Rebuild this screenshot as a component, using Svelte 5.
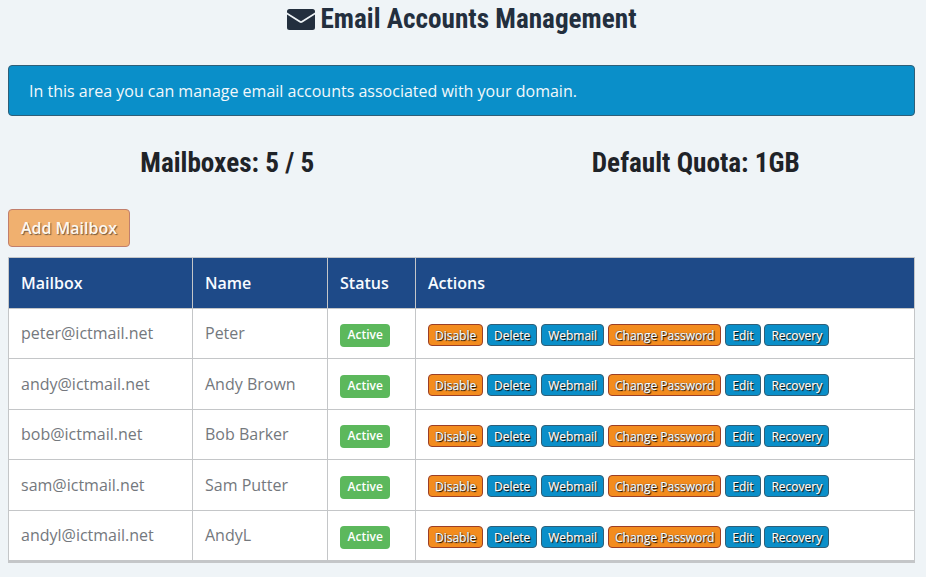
<script lang="ts">
  const mailboxes = [
    { email: 'peter@ictmail.net', name: 'Peter' },
    { email: 'andy@ictmail.net', name: 'Andy Brown' },
    { email: 'bob@ictmail.net', name: 'Bob Barker' },
    { email: 'sam@ictmail.net', name: 'Sam Putter' },
    { email: 'andyl@ictmail.net', name: 'AndyL' }
  ];

  const actions = [
    { label: 'Disable', tone: 'warn' },
    { label: 'Delete', tone: 'info' },
    { label: 'Webmail', tone: 'info' },
    { label: 'Change Password', tone: 'warn' },
    { label: 'Edit', tone: 'info' },
    { label: 'Recovery', tone: 'info' }
  ];
</script>

<div class="page">
  <h1 class="title">
    <svg class="envelope" viewBox="0 0 28 21" aria-hidden="true">
      <path d="M2.500 0h23A2.500 2.500 0 0 1 28 2.500v.9L14 12.200 0 3.400v-.9A2.500 2.500 0 0 1 2.500 0z" />
      <path d="M0 5.600l12.600 8a2.600 2.600 0 0 0 2.800 0l12.600-8v12.900a2.500 2.500 0 0 1-2.500 2.500h-23A2.500 2.500 0 0 1 0 18.500z" />
    </svg>
    <span>Email Accounts Management</span>
  </h1>

  <div class="notice">In this area you can manage email accounts associated with your domain.</div>

  <div class="stats">
    <h2>Mailboxes: 5 / 5</h2>
    <h2>Default Quota: 1GB</h2>
  </div>

  <button type="button" class="add">Add Mailbox</button>

  <table>
    <thead>
      <tr>
        <th class="c1">Mailbox</th>
        <th class="c2">Name</th>
        <th class="c3">Status</th>
        <th>Actions</th>
      </tr>
    </thead>
    <tbody>
      {#each mailboxes as box}
        <tr>
          <td>{box.email}</td>
          <td>{box.name}</td>
          <td class="low"><span class="status">Active</span></td>
          <td class="low">
            <div class="actions">
              {#each actions as action}
                <button type="button" class="act {action.tone}">{action.label}</button>
              {/each}
            </div>
          </td>
        </tr>
      {/each}
    </tbody>
  </table>
</div>

<style>
  :global(body) {
    margin: 0;
    background: #eff4f7;
  }

  .page {
    height: 577px;
    overflow: hidden;
    padding: 0 11px 0 8px;
    box-sizing: border-box;
    font-family: 'Open Sans', sans-serif;
    color: #74787d;
  }

  .title {
    display: flex;
    justify-content: center;
    align-items: center;
    gap: 6px;
    height: 38px;
    margin: 0 0 27px;
    font-family: Roboto, sans-serif;
    font-stretch: 75%;
    font-size: 27.2px;
    font-weight: 700;
    color: #232f3e;
  }

  .envelope {
    width: 28px;
    height: 21px;
    fill: #232f3e;
  }

  .notice {
    height: 51px;
    box-sizing: border-box;
    padding: 0 20px;
    display: flex;
    align-items: center;
    font-size: 16px;
    color: #f2f8fb;
    background: #0a8fc9;
    border: 1px solid #2f5f78;
    border-radius: 4px;
    margin-bottom: 28px;
  }

  .stats {
    display: grid;
    grid-template-columns: 1fr 1fr;
    column-gap: 30px;
    margin-bottom: 25px;
  }

  .stats h2 {
    margin: 0;
    height: 40px;
    line-height: 39px;
    text-align: center;
    font-family: Roboto, sans-serif;
    font-stretch: 75%;
    font-size: 27.2px;
    font-weight: 700;
    color: #1f2328;
  }

  .add {
    display: block;
    width: 122px;
    height: 38px;
    padding: 0;
    margin-bottom: 10px;
    font-family: inherit;
    font-size: 16px;
    font-weight: 600;
    color: #fdf8f0;
    text-shadow: 1px 1px 1px rgba(60, 50, 40, 0.7);
    background: #f0b06f;
    border: 1px solid #c17f6c;
    border-radius: 4px;
  }

  table {
    width: 907px;
    border-collapse: collapse;
    table-layout: fixed;
    background: #fff;
    border-bottom: 3px solid #c4c6c8;
  }

  th,
  td {
    border: 1px solid #c4c6c8;
    padding: 0 12px;
    text-align: left;
    white-space: nowrap;
  }

  th {
    height: 49.5px;
    background: #1e4a88;
    color: #f8fbff;
    font-size: 16px;
    font-weight: 600;
  }

  td {
    height: 49.5px;
    font-size: 16px;
  }

  /* badges and buttons sit a little under the row's middle */
  td.low {
    height: 46.5px;
    padding-top: 3px;
  }

  .c1 {
    width: 159px;
  }

  .c2 {
    width: 110px;
  }

  .c3 {
    width: 63px;
  }

  .status {
    display: inline-block;
    padding: 0 7.5px;
    height: 23px;
    line-height: 22px;
    font-size: 12px;
    font-weight: 600;
    color: #fff;
    background: #5cb85c;
    border-radius: 4px;
  }

  .actions {
    display: flex;
    gap: 3.85px;
    align-items: center;
  }

  .act {
    height: 22px;
    padding: 1px 6px 0;
    font-family: inherit;
    font-size: 12px;
    font-weight: 400;
    line-height: 19px;
    color: #fff;
    -webkit-text-stroke: 0.25px #fff;
    text-shadow: 1px 1px 1px #000, 0 0 1px #000;
    border-radius: 4px;
  }

  .warn {
    background: #f38c1e;
    border: 1px solid #9b3f27;
  }

  .info {
    background: #0a8fc9;
    border: 1px solid #2f5f78;
  }
</style>
